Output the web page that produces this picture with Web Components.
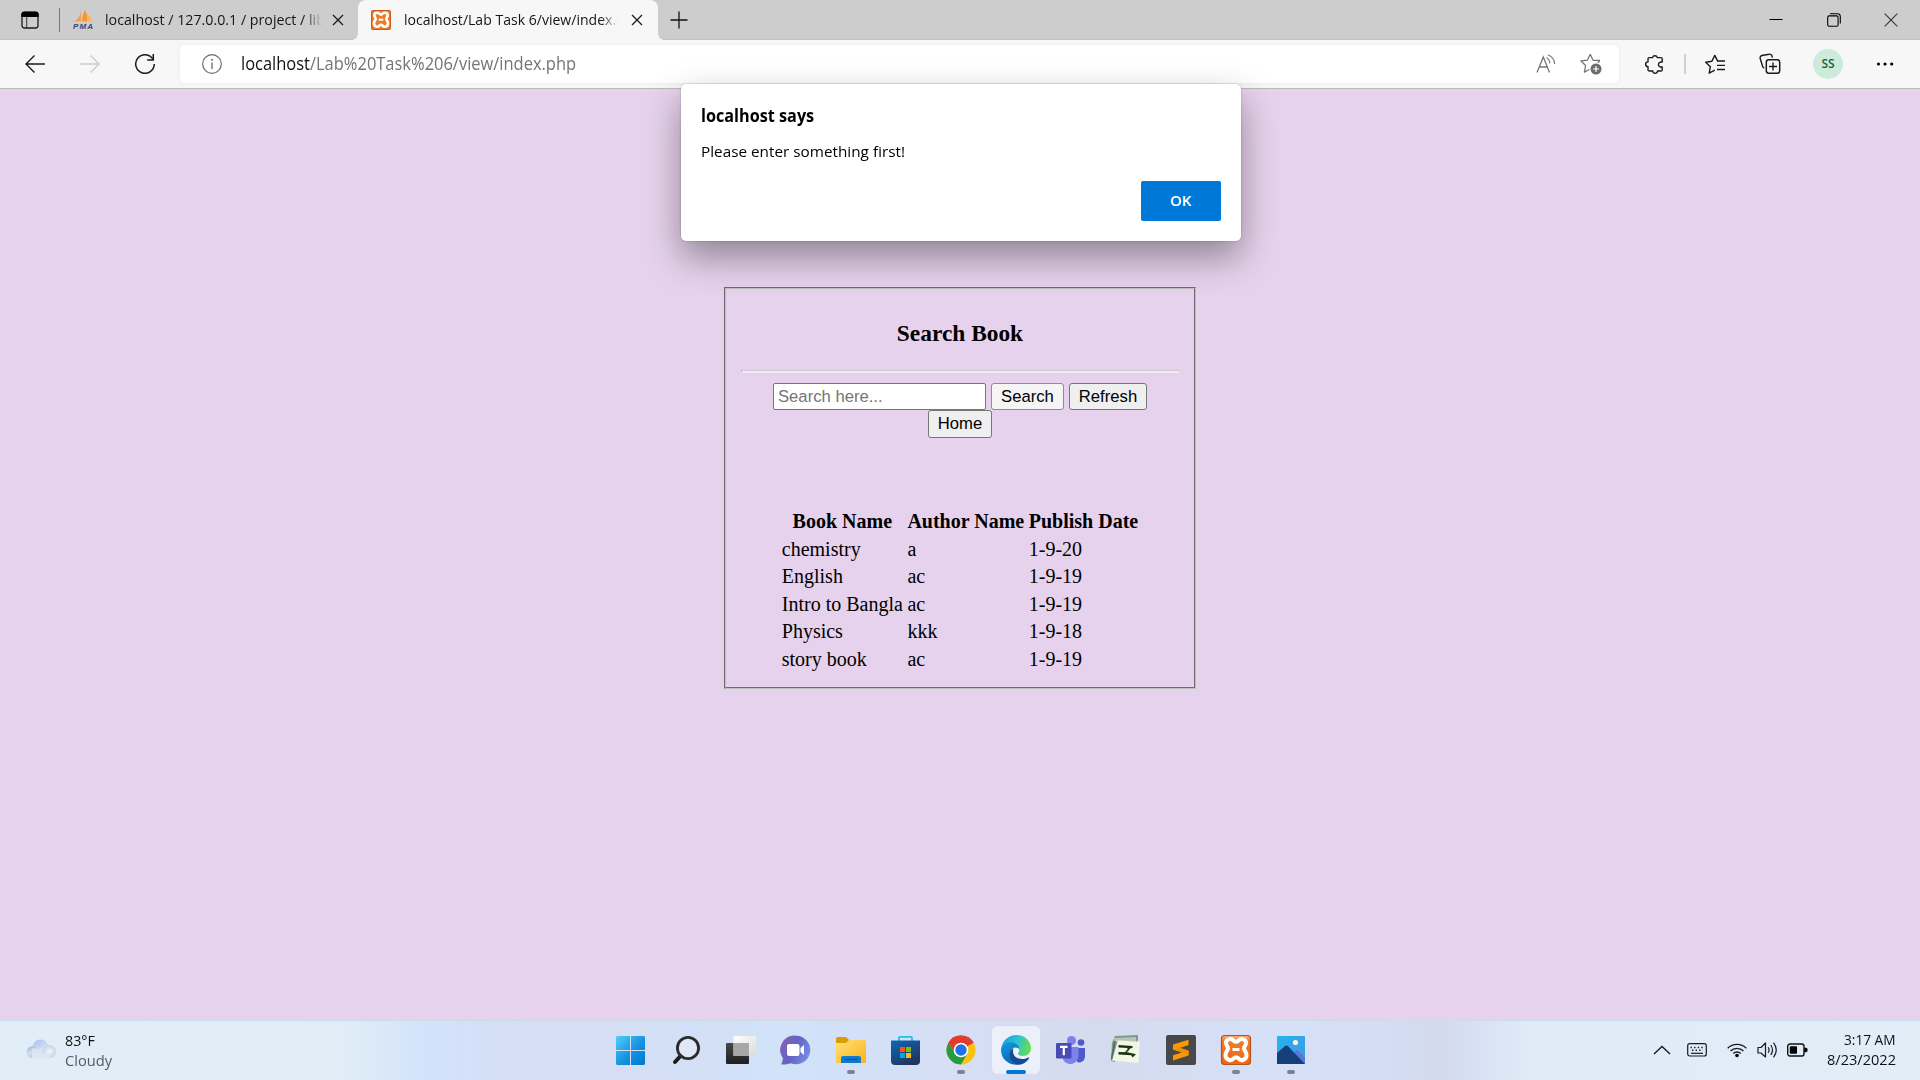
<!DOCTYPE html>
<html lang="en">
<head>
<meta charset="utf-8">
<title>localhost/Lab Task 6/view/index.php</title>
<style>
  html, body { margin: 0; height: 100%; overflow: hidden; }
  body { font-family: "Open Sans", "Noto Sans", sans-serif; }
</style>
</head>
<body>
<desktop-screen></desktop-screen>
<script>
const define = (name, html, ready) => customElements.define(name, class extends HTMLElement {
  constructor() {
    super();
    const t = document.createElement('template');
    t.innerHTML = html;
    this.attachShadow({ mode: 'open' }).appendChild(t.content.cloneNode(true));
  }
  connectedCallback() { if (ready) ready.call(this, this.shadowRoot); }
});

/* One line of text condensed or widened to an exact width (attribute w). */
define('fit-text', `<style>
  :host { display: block; white-space: nowrap; line-height: 20px; }
  span { display: inline-block; transform-origin: 0 50%; white-space: pre; }
</style><span><slot></slot></span>`, function (root) {
  const w = +this.getAttribute('w'), span = root.querySelector('span');
  this.style.width = w + 'px';
  const fit = () => {
    const natural = span.offsetWidth;
    if (natural) span.style.transform = `scaleX(${w / natural})`;
  };
  fit();
  requestAnimationFrame(fit);
});

const XAMPP = `<path d="M14 17c0-4 5-5 7.500-2.500 1.500 1.500 3.500 1.500 5 0C29 12 34 13 34 17c0 2.500-2 3.500-2 5.500s2.500 3 2.500 6.500c0 5-5.500 6.500-8 3.500-1.500-1.500-3.500-1.500-5 0-2.500 3-8 1.500-8-3.500 0-3.500 2.500-4.500 2.500-6.500s-2-3-2-5.500z" fill="none" stroke="#fff" stroke-width="4"/><path d="M20.500 23.500h7" stroke="#fff" stroke-width="3" fill="none"/>`;

/* name: [width, height, markup] */
const ICONS = {
  tabs: [20, 20, `<rect x="2" y="2.500" width="16" height="15.500" rx="2.500" fill="none" stroke="#1b1b1b" stroke-width="1.300"/><path d="M1.300 7V4.500A3 3 0 0 1 4.300 1.500h11.400a3 3 0 0 1 3 3V7z" fill="#000"/><path d="M6.700 7v11" stroke="#333"/>`],
  pma: [22, 20, `<path d="M8 1c-1 5-3 8-7 11 3-1 5-1 7-.500z" fill="#e9a34e"/><path d="M12 0c-2 4-3 8-3 11.500 2-.500 4 0 5 .500C15 8 14 3 12 0z" fill="#f79433"/><path d="M13.500 3c3 2 5 5 5.500 8.500-1-.500-2.500-.500-4 0 .500-3 0-6-1.500-8.500z" fill="#ffb45c"/><text x="0" y="19" font-family="Liberation Sans" font-size="8" font-weight="bold" font-style="italic" fill="#40407c" textLength="20">PMA</text>`],
  xfav: [20, 20, `<svg viewBox="9 9 30 30" width="20" height="20"><rect x="9" y="9" width="30" height="30" rx="3" fill="#c55a1b"/><rect x="10.500" y="10.500" width="27" height="27" rx="2" fill="#ef7b29"/>${XAMPP}</svg>`],
  x: [12, 12, `<path d="M1 1l10 10M11 1L1 11" stroke="#1a1a1a" stroke-width="1.300"/>`],
  plus: [18, 18, `<path d="M9 .500v17M.500 9h17" stroke="#111" stroke-width="1.300"/>`],
  min: [14, 14, `<path d="M.500 6.500h13" stroke="#000"/>`],
  restore: [14, 14, `<rect x=".700" y="2.900" width="10.400" height="10.400" rx="1.500" fill="none" stroke="#000" stroke-width="1.100"/><path d="M3 .700h7.500a2.800 2.800 0 0 1 2.800 2.800V10.500" fill="none" stroke="#000" stroke-width="1.100"/>`],
  close: [14, 14, `<path d="M.700.700l12.600 12.600M13.300.700L.700 13.300" stroke="#333" stroke-width="1.100"/>`],
  back: [20, 20, `<path d="M20 10H1M9.500 1.500L1 10l8.500 8.500" fill="none" stroke="#1a1a1a" stroke-width="1.400"/>`],
  fwd: [20, 20, `<path d="M0 10h19M10.500 1.500L19 10l-8.500 8.500" fill="none" stroke="#cbcbcb" stroke-width="1.400"/>`],
  reload: [22, 22, `<path d="M19 6.200A9.300 9.300 0 1 0 20.300 11" fill="none" stroke="#1a1a1a" stroke-width="1.500"/><path d="M19.300 1v6h-6.100" fill="none" stroke="#1a1a1a" stroke-width="1.500"/>`],
  info: [20, 20, `<circle cx="10" cy="10" r="9.300" fill="none" stroke="#6b6b6b" stroke-width="1.200"/><path d="M10 8.500v6.500" stroke="#6b6b6b" stroke-width="1.300"/><circle cx="10" cy="5.700" r="1" fill="#6b6b6b"/>`],
  read: [20, 20, `<path d="M1 18.500L7.300 3l6.200 15.500M3.200 13h8.200" fill="none" stroke="#767676" stroke-width="1.300"/><path d="M10.500 4.200c2 1 3.200 3 3.200 5.500M12 1.200c3.600 1.600 6.500 4.500 6.600 9.300" transform="translate(0 -.500)" fill="none" stroke="#767676" stroke-width="1.200"/>`],
  starplus: [22, 22, `<path d="M10.200 1.300l2.900 6h6.900M10.200 1.300L7.400 7.200.900 8l4.700 4.500-1.200 6.600 5-2.600" fill="none" stroke="#767676" stroke-width="1.300" stroke-linejoin="round"/><path d="M19.800 7.700l-2 2" stroke="#767676" stroke-width="1.300"/><circle cx="16" cy="16" r="5.500" fill="#6b6b6b"/><path d="M16 13v6M13 16h6" stroke="#fff" stroke-width="1.200"/>`],
  puzzle: [20, 20, `<path transform="translate(.7 0)" d="M4.300 3.600h3.500a2.500 2.500 0 0 1 4.800 0h3.600a1.300 1.300 0 0 1 1.300 1.300v3.200c-1.700-.500-3.800.400-3.800 2.400s2.100 2.900 3.800 2.400v2.800a1.300 1.300 0 0 1-1.300 1.300h-3.400c.1 1.400-1 2.300-2.300 2.300s-2.500-.900-2.400-2.300H4.600a1.300 1.300 0 0 1-1.300-1.300v-2.900C1.600 12.500.900 11.500.900 10.200s1-2.300 2.400-2.300V4.900a1.300 1.300 0 0 1 1-1.300z" fill="none" stroke="#1a1a1a" stroke-width="1.400" stroke-linejoin="round"/>`],
  starlist: [20, 20, `<path d="M12.700 7.100l-2.900-5.700-2.900 5.900-6.200.900 4.600 4.600-1.100 6.300 5.600-3" fill="none" stroke="#1a1a1a" stroke-width="1.400" stroke-linejoin="round"/><path d="M12 7h8M12 11.400h8M12 15.500h8" stroke="#1a1a1a" stroke-width="1.300"/>`],
  collect: [22, 22, `<path d="M5.300 15.200A2.600 2.600 0 0 1 3.500 13L1.200 5.500a2.500 2.500 0 0 1 1.800-3L10 1.200a2.500 2.500 0 0 1 3 1.900l.4 1.500" fill="none" stroke="#1a1a1a" stroke-width="1.400"/><rect x="7.300" y="6.800" width="13.400" height="13.400" rx="2.500" fill="none" stroke="#1a1a1a" stroke-width="1.500"/><path d="M14 9.500v8M10 13.500h8" stroke="#1a1a1a" stroke-width="1.400"/>`],
  dots: [18, 6, `<circle cx="2.500" cy="3" r="1.600"/><circle cx="9" cy="3" r="1.600"/><circle cx="15.700" cy="3" r="1.600"/>`],

  cloud: [30, 20, `<defs><linearGradient id="a" x1="0" y1="0" x2=".6" y2="1"><stop offset="0" stop-color="#a9c1ee"/><stop offset="1" stop-color="#dfe9fa"/></linearGradient><linearGradient id="b" x1="0" y1="0" x2=".3" y2="1"><stop offset="0" stop-color="#9bb5df"/><stop offset=".6" stop-color="#d3dff0"/><stop offset="1" stop-color="#bccbe0"/></linearGradient><radialGradient id="c"><stop offset="0" stop-color="#f4f7fb"/><stop offset="1" stop-color="#c8d3e3"/></radialGradient></defs><circle cx="14.500" cy="8.500" r="8" fill="url(#a)"/><circle cx="6.500" cy="13.300" r="6" fill="url(#b)"/><rect x="6" y="9.500" width="18" height="9.800" fill="#d8e3f3"/><circle cx="23.300" cy="12.600" r="6.700" fill="url(#c)"/><rect x="6" y="14" width="18" height="5.300" fill="#dde6f2"/>`],
  start: [48, 48, `<defs><linearGradient id="a" gradientUnits="userSpaceOnUse" x1="9" y1="10" x2="38" y2="39"><stop offset="0" stop-color="#4fd0fd"/><stop offset=".55" stop-color="#1592de"/><stop offset="1" stop-color="#0078d4"/></linearGradient></defs><path d="M10 10h13v14H9V11zM24 10h13l1 1v13H24zM9 25h14v14H10l-1-1zM24 25h14v13l-1 1H24z" fill="url(#a)"/>`],
  search: [48, 48, `<path d="M18.500 30L13 36" stroke="#1c1c1c" stroke-width="4" stroke-linecap="round"/><circle cx="26" cy="22" r="10.600" fill="#e7edf8" fill-opacity=".6" stroke="#2b2b2b" stroke-width="2.800"/>`],
  task: [48, 48, `<defs><linearGradient id="a" x2="0" y2="1"><stop offset="0" stop-color="#474747"/><stop offset="1" stop-color="#1e1e1e"/></linearGradient><linearGradient id="b" x2="1" y2="1"><stop offset="0" stop-color="#fff"/><stop offset="1" stop-color="#dadada"/></linearGradient></defs><rect x="9" y="17" width="23" height="21" rx="1" fill="url(#a)"/><rect x="16.500" y="10" width="22.500" height="20" rx="1" fill="url(#b)"/><rect x="16.500" y="17" width="15.500" height="13" fill="#a7a7a7"/>`],
  chat: [48, 48, `<defs><linearGradient id="a" x1="0" x2="1" y1=".2" y2=".6"><stop offset="0" stop-color="#8a60b0"/><stop offset=".5" stop-color="#6264c5"/><stop offset="1" stop-color="#7a8be8"/></linearGradient></defs><path d="M24 9.700a14.300 14.300 0 1 1-5.500 27.500C15 38.500 12 38.600 9.300 38.200c1-2 1.500-4 1.600-6A14.300 14.300 0 0 1 24 9.700z" fill="url(#a)"/><rect x="15" y="18" width="12.500" height="12" rx="2" fill="#fff"/><path d="M28.500 22l3.500-3v10l-3.500-3z" fill="#fff"/>`],
  files: [48, 48, `<defs><linearGradient id="a" x2="1" y2="1"><stop offset="0" stop-color="#ffe07a"/><stop offset="1" stop-color="#f9b514"/></linearGradient></defs><path d="M9 12.500q0-1.500 1.500-1.500H19l3 3v8H9z" fill="#dd9c04"/><path d="M9 17h10l3-3h15.500q1.500 0 1.500 1.500V36q0 1-1 1H10q-1 0-1-1z" fill="url(#a)"/><path d="M14 37v-5q0-2 2-2h16q2 0 2 2v5z" fill="#0f7cd2"/><path d="M17.500 33.500h13" stroke="#0a559f" stroke-width="1.500"/>`],
  store: [48, 48, `<defs><linearGradient id="a" x2=".6" y2="1"><stop offset="0" stop-color="#1067b5"/><stop offset="1" stop-color="#20365f"/></linearGradient></defs><path d="M17 16v-4.200q0-1 1-1h11q1 0 1 1V16" fill="none" stroke="#1fbff0" stroke-width="1.800"/><path d="M9 14.500h29V35q0 4-4 4H13q-4 0-4-4z" fill="url(#a)"/><path d="M18 21h5v5h-5z" fill="#f35325"/><path d="M24 21h5v5h-5z" fill="#81bc06"/><path d="M18 27h5v5h-5z" fill="#05a6f0"/><path d="M24 27h5v5h-5z" fill="#ffba08"/>`],
  chrome: [48, 48, `<circle cx="24" cy="24" r="14.500" fill="#fbc116"/><path d="M24 24L11.440 16.750A14.500 14.500 0 0 1 36.560 16.750z" fill="#e33b2e"/><path d="M24 16.750h12.560A14.500 14.500 0 0 0 11.440 16.750L17.720 27.600z" fill="#e33b2e"/><path d="M11.440 16.750A14.500 14.500 0 0 0 24 38.500l6.280-10.870L24 31.200l-6.280-3.600z" fill="#259b43"/><circle cx="24" cy="24" r="7.300" fill="#fff"/><circle cx="24" cy="24" r="5.700" fill="#1f72e8"/>`],
  edge: [48, 48, `<defs><linearGradient id="a" x1="0" x2="1" y1=".3" y2=".5"><stop offset="0" stop-color="#1b9ce0"/><stop offset=".5" stop-color="#2cc3cf"/><stop offset="1" stop-color="#67e04b"/></linearGradient><linearGradient id="b" x1=".2" x2=".6" y2="1"><stop offset="0" stop-color="#1398dd"/><stop offset="1" stop-color="#0a64b4"/></linearGradient></defs><path d="M9.500 22C10.500 14.500 16.500 9 24.300 9 33 9 39 15 39 22.500c0 4.500-3.500 7.500-7.800 7.500-3.500 0-5.200-1.300-5.200-2.500 0-.800 1.300-1.300 1.300-3.500 0-2.500-2.800-5.500-7.300-5.500-5 0-9 1.500-10.500 3.500z" fill="url(#a)"/><path d="M9 24c0-4.500 4.500-7.700 9.500-7.700 5.200 0 8.700 3.400 8.700 6.700-1-1-2.300-1.500-3.700-1.500-3.500 0-5.500 3.500-5.500 7 0 5.500 3.500 9 8.500 10.200C16.500 39.500 9 33 9 24z" fill="url(#b)"/><path d="M21.500 22c-2.800 1.500-4 4-4 6.500 0 6 5 10.300 9.500 10.300 4 0 8.200-3 10-6.500.400-.800-.200-1.200-.8-.800-5.500 3-13.500 1.500-14.900-4-.4-2-.4-4 .200-5.500z" fill="#124c91"/>`],
  teams: [48, 48, `<circle cx="24.500" cy="14.500" r="4.500" fill="#7b83eb"/><circle cx="34" cy="16.500" r="3.300" fill="#5059c9"/><path d="M30 22h8v9a6 6 0 0 1-8 5z" fill="#5059c9"/><path d="M16 21h15.500v8.500a8.200 8.200 0 0 1-15.500 4z" fill="#7b83eb"/><rect x="9" y="17" width="15.500" height="15.500" rx="1.300" fill="#464bb5"/><path d="M13 20.800h7.500M16.800 20.800v8.500" stroke="#fff" stroke-width="2.200"/>`],
  sheet: [48, 48, `<path d="M13 10l23-1v5l-2 2-19 1-2 19-4-1 1-18z" fill="#7f9a87"/><path d="M12 12l22-1v5H12z" fill="#b4c5bb"/><path d="M16 14.300l22 1.700-1.500 21L10 34.500z" fill="#f1f6e6"/><path d="M13 15l-3.500 18" stroke="#526b59" stroke-width="1.500"/><path d="M16.500 19l14 1v2l-2 .3-2.500 2.200-.8-2.500-8.700-.500zM16.500 26l9 .300 8.500 2-3.500 3.200-1.200-2.200-12.800-.800z" fill="#16370d"/><path d="M27 23l-3.500 3.500" stroke="#16370d" stroke-width="1.500"/>`],
  sublime: [48, 48, `<rect x="9" y="9" width="30" height="30" rx="2" fill="#484848"/><path d="M16 18.500l15.500-4.700v5.300L22.500 22l9 2.700v4.800L16 34.500v-5.300l9-2.800-9-2.800z" fill="#ff9800"/><path d="M16 23.500l15.500 5v-4l-9-2.800z" fill="#f09000"/>`],
  xampp: [48, 48, `<defs><linearGradient id="a" x2="0" y2="1"><stop offset="0" stop-color="#ffad7c"/><stop offset=".2" stop-color="#f07a2a"/><stop offset="1" stop-color="#ea6a14"/></linearGradient></defs><rect x="9.500" y="9.500" width="29" height="29" rx="3" fill="url(#a)" stroke="#b7541b" stroke-width="1.200"/>${XAMPP}`],
  photos: [48, 48, `<defs><linearGradient id="a" x2="1" y2="1"><stop offset="0" stop-color="#23b5ee"/><stop offset="1" stop-color="#4695e4"/></linearGradient></defs><rect x="10" y="10" width="28" height="28" rx="1" fill="url(#a)"/><path d="M22 33l6.500-8q1.500-1.800 3 0L38 31v7H22z" fill="#5877d6"/><path d="M10 27l8-7q1.500-1 3 .300L38 38H10z" fill="#173f7c"/><circle cx="28.500" cy="16.500" r="2.600" fill="#fff5e2"/>`],
  chevron: [18, 10, `<path d="M1 9l8-7.500L17 9" fill="none" stroke="#1a1a1a" stroke-width="1.400"/>`],
  keyboard: [20, 14, `<rect x=".700" y=".700" width="18.600" height="12.300" rx="2" fill="none" stroke="#1a1a1a" stroke-width="1.200"/><path d="M3.500 4.500h13M5 7.200h11" stroke="#1a1a1a" stroke-width="1.400" stroke-dasharray="1.400 2.200"/><path d="M4 10.300h12" stroke="#1a1a1a" stroke-width="1.200"/>`],
  wifi: [20, 16, `<path d="M.700 6.200a13 13 0 0 1 18.600 0M3.500 9a9.200 9.200 0 0 1 13 0M6.300 11.500a5.300 5.300 0 0 1 7.400 0" fill="none" stroke="#1a1a1a" stroke-width="1.300"/><circle cx="10" cy="13.500" r="1.800"/>`],
  sound: [21, 18, `<path d="M1 6.500h3L8.500 2v14L4 12H1z" fill="none" stroke="#1a1a1a" stroke-width="1.200" stroke-linejoin="round"/><path d="M11.200 6.200q1.800 2.800 0 5.600M13.800 4q3.400 5 0 10M16.500 1.700q5.600 7.300 0 14.600" fill="none" stroke="#1a1a1a" stroke-width="1.200"/>`],
  battery: [21, 14, `<rect x=".700" y="1" width="16.300" height="12" rx="2.200" fill="none" stroke="#111" stroke-width="1.400"/><rect x="2.800" y="3.200" width="7.200" height="7.600" rx=".8"/><path d="M17.500 5l2.500.500v3l-2.500.500z" stroke="#111"/>`]
};
define('ui-icon', `<style>:host { display: block; flex: none; } svg { display: block; }</style><div></div>`, function (root) {
  const [w, h, art] = ICONS[this.getAttribute('name')];
  root.querySelector('div').innerHTML = `<svg width="${w}" height="${h}" viewBox="0 0 ${w} ${h}">${art}</svg>`;
});

define('browser-tab', `<style>
  :host { display: flex; align-items: center; box-sizing: border-box; height: 40px; position: relative; font-size: 15px; color: #161616; }
  .title { overflow: hidden; width: 217px; margin: 0 10px 2px 10px; -webkit-mask: linear-gradient(90deg, #000 92%, transparent); mask: linear-gradient(90deg, #000 92%, transparent); }
  :host([active]) .title { margin-right: 13px; }
  :host([active]) { background: #f7f7f7; border-radius: 8px 8px 0 0; }
  :host([active])::before, :host([active])::after { content: ""; position: absolute; bottom: 0; width: 6px; height: 6px; }
  :host([active])::before { left: -6px; background: radial-gradient(circle at 0 0, transparent 5.5px, #f7f7f7 6px); }
  :host([active])::after { right: -6px; background: radial-gradient(circle at 100% 0, transparent 5.5px, #f7f7f7 6px); }
</style><slot name="icon"></slot><div class="title"><slot></slot></div><ui-icon name="x"></ui-icon>`);

define('tab-strip', `<style>
  :host { display: flex; height: 40px; background: linear-gradient(#cdcdcd 38px, #bfbfbf); }
  .menu { width: 59px; display: flex; align-items: center; justify-content: center; }
  .rule { width: 1px; height: 24px; margin: 8px 13px 0 0; background: #777; }
  .first { width: 285px; }
  .second { width: 300px; padding-left: 13px; box-sizing: border-box; }
  .plus { display: flex; align-items: center; margin-left: 12px; flex: 1; }
  .win { display: flex; }
  .win ui-icon { width: 57.500px; display: flex; justify-content: center; align-items: center; }
</style>
<div class="menu"><ui-icon name="tabs"></ui-icon></div><div class="rule"></div>
<browser-tab class="first"><ui-icon slot="icon" name="pma"></ui-icon><fit-text w="220">localhost / 127.0.0.1 / project / lib</fit-text></browser-tab>
<browser-tab class="second" active><ui-icon slot="icon" name="xfav"></ui-icon><fit-text w="238" style="margin-left:3px">localhost/Lab Task 6/view/index.php</fit-text></browser-tab>
<div class="plus"><ui-icon name="plus"></ui-icon></div>
<div class="win"><ui-icon name="min"></ui-icon><ui-icon name="restore"></ui-icon><ui-icon name="close"></ui-icon></div>`);

define('tool-bar', `<style>
  :host { display: flex; align-items: center; height: 49px; box-sizing: border-box; padding: 0 0 1px 7px; border-bottom: 1px solid #b9b9b9; background: #f7f7f7; }
  .s { flex: none; display: flex; align-items: center; justify-content: center; }
  .address { flex: none; display: flex; align-items: center; box-sizing: border-box; width: 1439px; height: 38px; margin: 0 5px 0 8px; padding: 0 6px 0 22px; background: #fff; border-radius: 5px; box-shadow: 0 0 4px #0000000d; font-size: 17.500px; color: #747474; }
  .url { flex: 1; padding: 0 0 1px 19px; } b { font-weight: 400; color: #111; }
  .bar { width: 2px; height: 20px; background: #cfcfcf; }
  .me { width: 30px; height: 30px; border-radius: 50%; background: #cdebdc; color: #1c6140; font-size: 12px; font-weight: 600; }
</style>
<div class="s" style="width:55px"><ui-icon name="back"></ui-icon></div><div class="s" style="width:55px"><ui-icon name="fwd"></ui-icon></div><div class="s" style="width:55px"><ui-icon name="reload"></ui-icon></div>
<div class="address"><ui-icon name="info"></ui-icon><div class="url"><fit-text w="335"><b>localhost</b>/Lab%20Task%206/view/index.php</fit-text></div><div class="s" style="width:45px"><ui-icon name="read"></ui-icon></div><div class="s" style="width:45px"><ui-icon name="starplus"></ui-icon></div></div>
<div class="s" style="width:60px"><ui-icon name="puzzle"></ui-icon></div><div class="bar"></div>
<div class="s" style="width:58px"><ui-icon name="starlist"></ui-icon></div><div class="s" style="width:52px"><ui-icon name="collect"></ui-icon></div>
<div class="s" style="width:64px"><div class="s me"><fit-text w="13">SS</fit-text></div></div><div class="s" style="width:50px"><ui-icon name="dots"></ui-icon></div>`);

define('book-table', `<style>
  :host { display: block; } table { border-spacing: 2.500px; font: 20px/22.500px "Liberation Serif", serif; color: #000; }
  th, td { padding: 1.250px; white-space: nowrap; } td { text-align: left; }
  th, tbody tr:nth-child(even) td { padding-bottom: 2.250px; }
</style><table><thead><tr><th>Book Name</th><th>Author Name</th><th>Publish Date</th></tr></thead><tbody></tbody></table>`, function (root) {
  root.querySelector('tbody').innerHTML = [['chemistry', 'a', '1-9-20'], ['English', 'ac', '1-9-19'], ['Intro to Bangla', 'ac', '1-9-19'], ['Physics', 'kkk', '1-9-18'], ['story book', 'ac', '1-9-19']]
    .map(r => '<tr>' + r.map(c => `<td>${c}</td>`).join('') + '</tr>').join('');
});

define('search-page', `<style>
  :host { display: flex; justify-content: center; align-items: flex-start; padding-top: 198px; box-sizing: border-box; background: #e6d2ec; }
  section { box-sizing: border-box; width: 472px; height: 402px; border: 2px groove #c0c0c0; padding: 30px 15px 0; display: flex; flex-direction: column; align-items: center; font-family: "Liberation Serif", serif; }
  h3 { margin: 0; font-size: 23.400px; line-height: 28px; color: #000; }
  .hr { width: 438px; height: 3px; margin: 23px 0 10px; box-sizing: border-box; border-top: 1px dotted #c3b3c8; border-left: 1px solid #aaa; border-bottom: 2px solid #eee; }
  .row { display: flex; gap: 5px; }
  input, button { box-sizing: border-box; height: 27px; margin: 0; font: 16.670px "Liberation Sans", sans-serif; border: 1px solid #767676; border-radius: 3px; color: #000; }
  input { width: 213px; padding: 0 4px; background: #fff; border-radius: 2px; } input::placeholder { color: #757575; }
  button { background: #efefef; padding: 0; }
  book-table { margin-top: 69px; }
</style><section><h3>Search Book</h3><div class="hr"></div>
<div class="row"><input placeholder="Search here..."><button style="width:73px;background:#f5f5f5;border-color:#8d8d8d">Search</button><button style="width:78px">Refresh</button></div>
<button style="width:64px;height:28px">Home</button><book-table></book-table></section>`);

define('alert-dialog', `<style>
  :host { display: flex; flex-direction: column; box-sizing: border-box; width: 560px; height: 157px; padding: 21px 20px 20px 19.500px; background: #fff; border-radius: 5px; color: #000; box-shadow: 0 0 2px #0004, 0 16px 36px #00000060; }
  .t { font-size: 17.500px; font-weight: 700; } .m { font-size: 15px; margin-top: 16px; }
  button { align-self: flex-end; margin-top: auto; width: 80px; height: 40px; border: 0; border-radius: 2px; background: #0078d7; color: #fff; font: 600 15px "Open Sans", sans-serif; display: flex; align-items: center; justify-content: center; padding: 0 1px 2px 0; }
</style><fit-text class="t" w="113">localhost says</fit-text><fit-text class="m" w="204">Please enter something first!</fit-text><button><fit-text w="21">OK</fit-text></button>`);

define('task-item', `<style>
  :host { display: flex; flex-direction: column; align-items: center; width: 48px; height: 48px; border-radius: 5px; flex: none; }
  i { width: 8px; height: 4px; margin-top: -4px; border-radius: 2px; background: #7d828c; display: none; }
  :host([open]) i, :host([active]) i { display: block; }
  :host([active]) i { width: 20px; background: #0078d4; }
  :host([active]) { background: #ecf0fa; box-shadow: 0 0 1px #8a9ab855; }
</style><slot></slot><i></i>`);

define('task-bar', `<style>
  :host { display: flex; height: 60px; box-sizing: border-box; border-top: 1px solid #cbdbe9; color: #111; font-size: 15px;
    background: linear-gradient(90deg, #e1eef7 0, #e0edf7 340px, #d2e2fa 430px, #d5dff5 510px, #d5def4 620px, #d1e2f9 780px, #d5dff5 950px, #d5dbef 1100px, #d6e1f8 1290px, #d3daf0 1440px, #dfebf7 1530px, #e1eef8 1920px); }
  .weather { display: flex; width: 607px; padding: 18px 0 0 26px; box-sizing: border-box; gap: 9px; }
  .weather > div { margin-top: -9px; }
  .apps { display: flex; gap: 7px; padding-top: 5px; flex: 1; }
  .tray { display: flex; align-items: center; padding: 0 24px 2px 0; }
  .clock { margin: 0 0 2px 19px; display: flex; flex-direction: column; align-items: flex-end; }
</style>
<div class="weather"><ui-icon name="cloud"></ui-icon><div><fit-text w="29.5">83°F</fit-text><fit-text w="47" style="color:#555b62">Cloudy</fit-text></div></div>
<div class="apps"></div>
<div class="tray"><ui-icon name="chevron"></ui-icon><ui-icon name="keyboard" style="margin-left:16px"></ui-icon><ui-icon name="wifi" style="margin-left:20px"></ui-icon><ui-icon name="sound" style="margin-left:10px"></ui-icon><ui-icon name="battery" style="margin-left:9px"></ui-icon>
<div class="clock"><fit-text w="52">3:17 AM</fit-text><fit-text w="69">8/23/2022</fit-text></div></div>`, function (root) {
  root.querySelector('.apps').innerHTML = ['start', 'search', 'task', 'chat', 'files open', 'store', 'chrome open', 'edge active', 'teams', 'sheet', 'sublime', 'xampp open', 'photos open']
    .map(s => { const [n, f = ''] = s.split(' '); return `<task-item ${f}><ui-icon name="${n}"></ui-icon></task-item>`; }).join('');
});

define('desktop-screen', `<style>
  :host { display: flex; flex-direction: column; width: 1920px; height: 1080px; position: relative; overflow: hidden; }
  search-page { flex: 1; }
  alert-dialog { position: absolute; left: 681px; top: 84px; }
</style><tab-strip></tab-strip><tool-bar></tool-bar><search-page></search-page><task-bar></task-bar><alert-dialog></alert-dialog>`);
</script>
</body>
</html>
